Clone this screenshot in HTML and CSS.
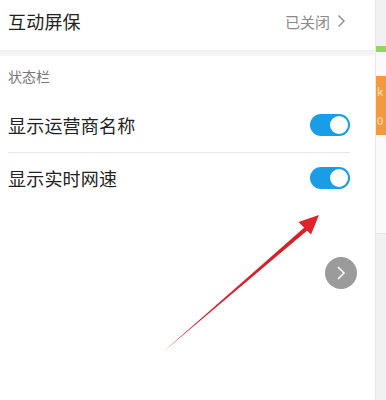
FILE: index.html
```html
<!DOCTYPE html>
<html lang="zh">
<head>
<meta charset="utf-8">
<link rel="stylesheet" href="styles.css">
</head>
<body>
<div class="screen">
  <div class="panel">
    <div class="row top">
      <span class="label">互动屏保</span>
      <span class="value">已关闭<svg class="chev" width="9" height="14" viewBox="0 0 9 14"><path d="M1.5 1.5 L7 7 L1.5 12.5" fill="none" stroke="#8a8a8a" stroke-width="1.4"/></svg></span>
    </div>
    <div class="gap"></div>
    <div class="section">
      <div class="section-title">状态栏</div>
      <div class="row toggle-row first">
        <span class="label">显示运营商名称</span>
        <span class="switch"><span class="knob"></span></span>
      </div>
      <div class="divider"></div>
      <div class="row toggle-row">
        <span class="label">显示实时网速</span>
        <span class="switch"><span class="knob"></span></span>
      </div>
    </div>
  </div>
  <div class="strip">
    <div class="green"></div>
    <div class="strip-white"></div>
    <div class="orange"><span>k</span><span>0</span></div>
    <div class="strip-white2"></div>
    <div class="strip-gray"></div>
  </div>
  <div class="fab"><svg width="12" height="16" viewBox="0 0 12 16"><path d="M3 2 L9 8 L3 14" fill="none" stroke="#fff" stroke-width="1.6"/></svg></div>
  <svg class="arrow" width="386" height="400" viewBox="0 0 386 400">
    <path d="M163 352 L306 226 L308.5 229.5 Z" fill="#d9202a"/>
    <path d="M319 215 L298.5 222 L311 234.5 Z" fill="#e0222c"/>
  </svg>
</div>
</body>
</html>
```
FILE: styles.css
```css
html, body {
  margin: 0;
  padding: 0;
  background: #fff;
}
.screen {
  position: relative;
  width: 386px;
  height: 400px;
  display: flex;
  overflow: hidden;
  font-family: "Noto Sans CJK SC", "Noto Sans", sans-serif;
}
.panel {
  width: 375px;
  background: #fff;
  display: flex;
  flex-direction: column;
}
.row {
  display: flex;
  align-items: center;
  justify-content: space-between;
  padding: 0 25px 0 8px;
}
.top {
  height: 50px;
  box-sizing: border-box;
  padding-right: 29px;
  padding-bottom: 8px;
}
.label {
  font-size: 18px;
  color: #222;
  letter-spacing: 0.2px;
}
.value {
  display: flex;
  align-items: center;
  gap: 7px;
  font-size: 15px;
  color: #8a8a8a;
}
.gap {
  height: 6px;
  background: linear-gradient(#f0f0f0, #f7f7f7);
}
.section-title {
  font-size: 14px;
  color: #777;
  padding: 10px 8px 0;
  height: 42px;
  box-sizing: border-box;
  line-height: 20px;
}
.toggle-row {
  height: 50px;
}
.toggle-row.first {
  height: 54px;
}
.divider {
  height: 1px;
  background: #e6e6e6;
  margin: 0 25px 0 8px;
}
.switch {
  width: 40px;
  height: 22px;
  border-radius: 11px;
  background: #1a9de6;
  position: relative;
}
.knob {
  position: absolute;
  right: 2px;
  top: 2px;
  width: 18px;
  height: 18px;
  border-radius: 50%;
  background: #fff;
}
.strip {
  flex: 1;
  background: #f0f0f0;
  border-left: 1px solid #e8e8e8;
  display: flex;
  flex-direction: column;
  overflow: hidden;
}
.green {
  margin-top: 46px;
  height: 6px;
  background: #8fd65c;
}
.strip-white {
  height: 24px;
  background: #fafafa;
}
.orange {
  height: 59px;
  background: #f39a3e;
  color: #fde3c6;
  font-size: 11px;
  display: flex;
  flex-direction: column;
  justify-content: space-around;
  overflow: hidden;
}
.orange span {
  padding-left: 1px;
}
.strip-white2 {
  height: 98px;
  background: #fafafa;
  border-bottom: 1px solid #e4e4e4;
}
.strip-gray {
  flex: 1;
  background: #f1f1f1;
}
.fab {
  position: absolute;
  left: 325px;
  top: 257px;
  width: 32px;
  height: 32px;
  border-radius: 50%;
  background: #9b9b9b;
  display: flex;
  align-items: center;
  justify-content: center;
}
.arrow {
  position: absolute;
  left: 0;
  top: 0;
  pointer-events: none;
}
```
